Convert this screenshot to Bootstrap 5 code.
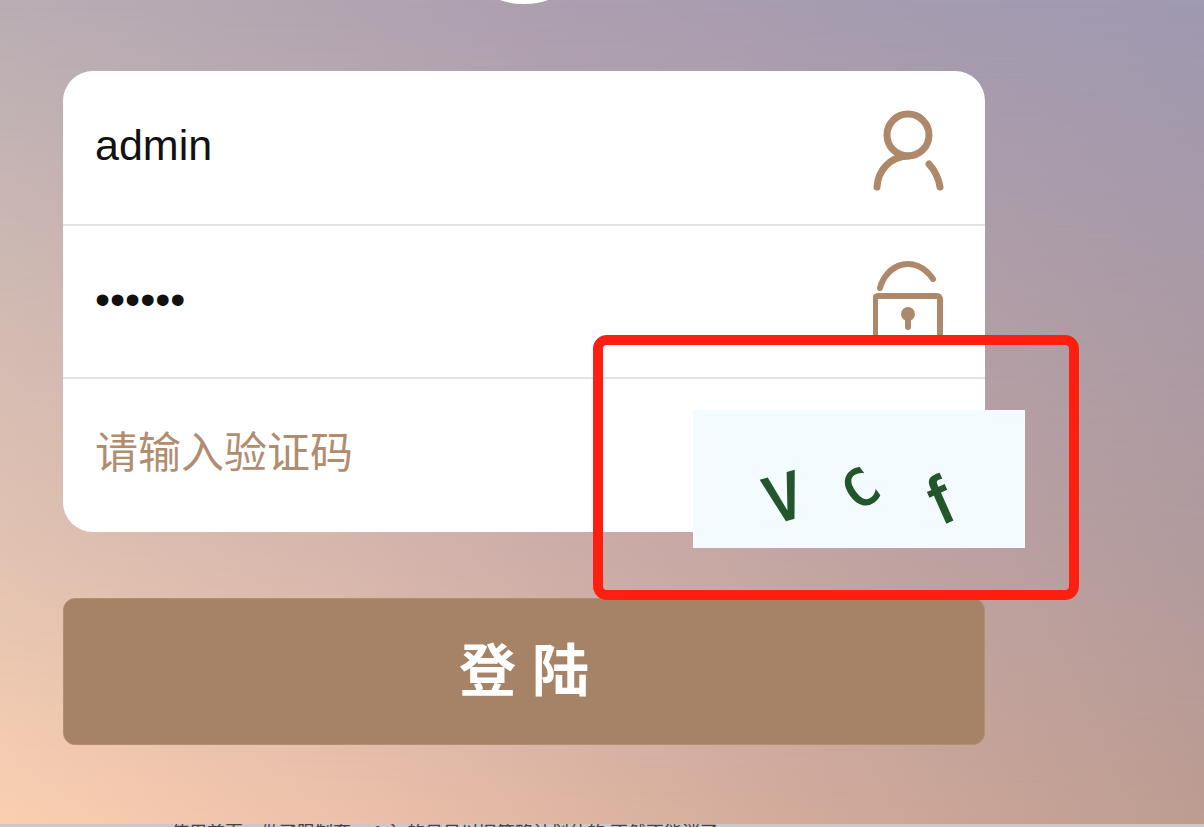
<!DOCTYPE html>
<html lang="zh-CN">
<head>
<meta charset="utf-8">
<meta name="viewport" content="width=device-width, initial-scale=1">
<title>登陆</title>
<link rel="stylesheet" href="https://cdn.jsdelivr.net/npm/bootstrap@5.3.0/dist/css/bootstrap.min.css">
<style>
  body { font-family: "Liberation Sans", "Noto Sans CJK SC", sans-serif; }
  .stage {
    padding: 71px 219px 0 63px;
    isolation: isolate;
    background: linear-gradient(90deg, #b9aeb4 0%, #ac9fb0 45%, #9f99b1 100%);
  }
  /* warm sunset light rising from the lower left */
  .stage::before {
    content: "";
    position: absolute;
    inset: 0;
    z-index: -1;
    background: linear-gradient(90deg, #facfb0 0%, #ecc0aa 30%, #d3ab9b 65%, #bd9c91 100%);
    -webkit-mask-image: linear-gradient(180deg, transparent 0%, rgba(0,0,0,.4) 40%, rgba(0,0,0,.6) 65%, #000 100%);
    mask-image: linear-gradient(180deg, transparent 0%, rgba(0,0,0,.4) 40%, rgba(0,0,0,.6) 65%, #000 100%);
  }
  .emblem { top: 0; left: 63px; right: 219px; height: 4px; }
  .panel { border-radius: 30px; }
  .field { height: 153px; padding: 0 38px 0 32px; }
  .field + .field { border-top: 2px solid #e4e2e3; }
  .field-last { height: 155px; }
  .field input { font-size: 43px; line-height: 60px; color: #111; padding: 0 0 6px; }
  .field input::placeholder { color: #b18d70; opacity: 1; }
  .field svg { width: 74px; height: 86px; stroke: #ae886a; stroke-width: 7; fill: none; stroke-linecap: round; }
  .captcha { right: -40px; top: 339px; width: 332px; height: 138px; background: #f3fbff; }
  .captcha text { font-family: "DejaVu Sans Mono", monospace; fill: #24562c; stroke: #24562c; stroke-width: 2; }
  .marker { right: -94px; top: 264px; width: 486px; height: 265px; border: 10px solid #ff1f10; border-radius: 14px; z-index: 3; pointer-events: none; }
  .login { height: 147px; margin-top: 66px; border-radius: 12px; font-size: 57px; --bs-btn-bg: #a68267; --bs-btn-border-color: #b28e74; --bs-btn-hover-bg: #997459; --bs-btn-color: #fff; }
  .caption { height: 3px; background: #c9c9c9; color: #444; font-size: 18px; line-height: 18px; padding-left: 171px; }
</style>
</head>
<body class="min-vh-100 d-flex flex-column overflow-hidden">
<main class="stage position-relative flex-grow-1">
  <div class="emblem position-absolute d-flex justify-content-center">
    <svg width="48" height="4" viewBox="0 0 48 4" aria-hidden="true"><path d="M0 0Q10 4 24 4T48 0Z" fill="#fff"/></svg>
  </div>
  <form>
    <div class="panel bg-white position-relative">
      <div class="field d-flex align-items-center">
        <input class="form-control border-0 bg-transparent shadow-none" type="text" value="admin" aria-label="用户名">
        <svg class="flex-shrink-0" viewBox="0 0 74 86" aria-hidden="true">
          <circle cx="35" cy="30" r="21"/>
          <path d="M4 82C5 66 16 52 35 51M56 59Q65 69 67 82"/>
        </svg>
      </div>
      <div class="field d-flex align-items-center">
        <input class="form-control border-0 bg-transparent shadow-none" type="password" value="123456" aria-label="密码">
        <svg class="flex-shrink-0" viewBox="0 0 74 86" aria-hidden="true">
          <path d="M7 29C13 5 42-6 60 20" stroke-width="6"/>
          <rect x="2" y="37" width="65" height="46" rx="3" stroke-width="6"/>
          <circle cx="35" cy="55" r="7" fill="#ae886a" stroke="none"/>
          <path d="M35 57V68" stroke-width="6"/>
        </svg>
      </div>
      <div class="field field-last d-flex align-items-center">
        <input class="form-control border-0 bg-transparent shadow-none" type="text" placeholder="请输入验证码" aria-label="验证码">
      </div>
      <svg class="captcha position-absolute" viewBox="0 0 332 138" role="img" aria-label="验证码图片">
        <g text-anchor="middle">
          <text transform="translate(97 109) rotate(-16)" font-size="62">V</text>
          <text transform="translate(178 93) rotate(-36)" font-size="50">C</text>
          <text transform="translate(257 111) rotate(-24)" font-size="66" style="font-family:'Liberation Sans',sans-serif">f</text>
        </g>
      </svg>
      <div class="marker position-absolute"></div>
    </div>
    <button class="login btn w-100 fw-bold p-0" type="submit">登 陆</button>
  </form>
</main>
<footer class="caption overflow-hidden text-nowrap">使用首页，做了限制套， f 主 的日日以旧策略计划什的 不然不能消了</footer>
<script src="https://cdn.jsdelivr.net/npm/bootstrap@5.3.0/dist/js/bootstrap.bundle.min.js"></script>
</body>
</html>
